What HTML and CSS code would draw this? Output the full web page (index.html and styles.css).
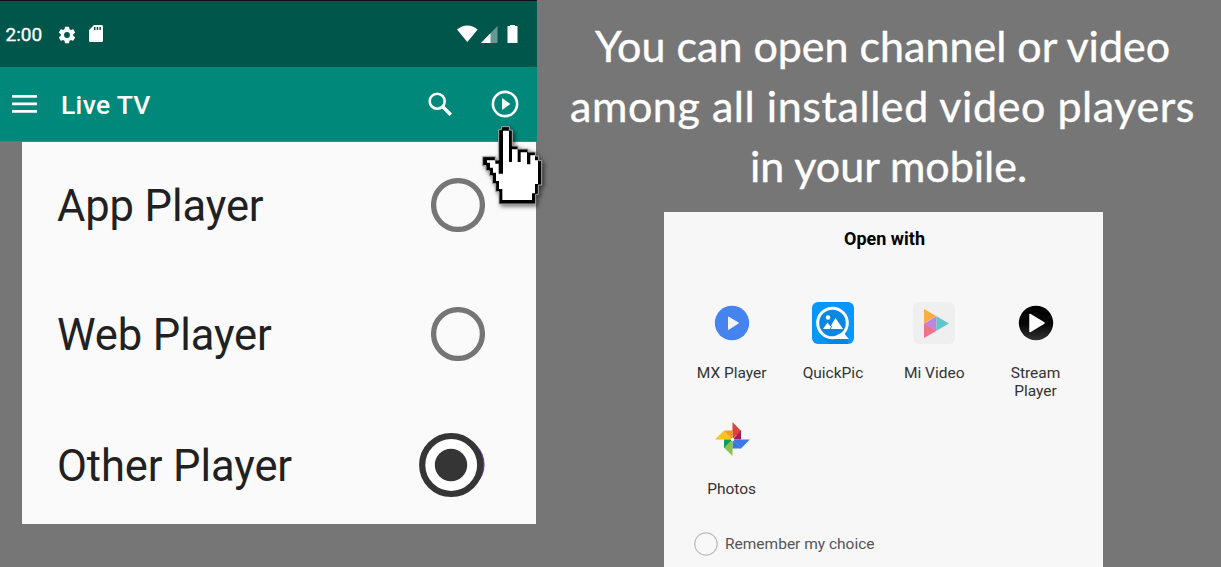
FILE: index.html
```html
<!DOCTYPE html>
<html lang="en">
<head>
<meta charset="utf-8">
<title>Live TV</title>
<link rel="stylesheet" href="styles.css">
</head>
<body>
<main class="stage">
  <section class="phone">
    <header class="status">
      <span class="clock">2:00</span>
      <svg class="gear" width="20" height="20" viewBox="0 0 24 24"><path fill="#fff" d="M19.43 12.98c.04-.32.07-.64.07-.98s-.03-.66-.07-.98l2.11-1.65c.19-.15.24-.42.12-.64l-2-3.46c-.12-.22-.39-.3-.61-.22l-2.49 1c-.52-.4-1.08-.73-1.69-.98l-.38-2.65C14.46 2.18 14.25 2 14 2h-4c-.25 0-.46.18-.49.42l-.38 2.65c-.61.25-1.17.59-1.69.98l-2.49-1c-.23-.09-.49 0-.61.22l-2 3.46c-.13.22-.07.49.12.64l2.11 1.65c-.04.32-.07.65-.07.98s.03.66.07.98l-2.11 1.65c-.19.15-.24.42-.12.64l2 3.46c.12.22.39.3.61.22l2.49-1c.52.4 1.08.73 1.69.98l.38 2.65c.03.24.24.42.49.42h4c.25 0 .46-.18.49-.42l.38-2.65c.61-.25 1.17-.59 1.69-.98l2.49 1c.23.09.49 0 .61-.22l2-3.46c.12-.22.07-.49-.12-.64zM12 15.5a3.5 3.5 0 1 1 0-7 3.500 3.500 0 0 1 0 7z"/></svg>
      <svg class="card" width="14" height="17" viewBox="0 0 14 17"><path fill="#fff" fill-rule="evenodd" d="M5 0h7.500Q14 0 14 1.500v14q0 1.500-1.500 1.500h-11Q0 17 0 15.500V5zM5 2v3h1.500V2zm2.700 0v3h1.500V2zm2.700 0v3h1.500V2z"/></svg>
      <svg class="signals" width="61" height="19" viewBox="0 0 61 19"><path fill="#fff" d="M0 4.500Q10.300-3.500 20.700 4.500L10.300 17z"/><path fill="#fff" opacity=".4" d="M40.500 1v17H24z"/><path fill="#fff" d="M33.500 8.200V18H24zM53 1V0h5v1h2.500v17h-10V1z"/></svg>
    </header>
    <div class="toolbar">
      <svg class="menu" width="26" height="18" viewBox="0 0 26 18"><path fill="#fff" d="M0 0h25v2.700H0zm0 7.500h25v2.700H0zM0 15h25v2.700H0z"/></svg>
      <h1 class="title">Live TV</h1>
      <svg class="search" width="25" height="25" viewBox="0 0 25 25" fill="none" stroke="#fff"><circle cx="9.200" cy="9.200" r="7.500" stroke-width="2.600"/><path d="m14.500 14.500 8.300 8.300" stroke-width="3.400"/></svg>
      <svg class="play" width="28" height="28" viewBox="0 0 28 28"><circle cx="14" cy="14" r="12.100" fill="none" stroke="#fff" stroke-width="2.600"/><path fill="#fff" d="M11 8l8.300 6-8.300 6z"/></svg>
    </div>
    <div class="options">
      <div class="option"><span class="label">App Player</span><svg width="54" height="54"><circle cx="27" cy="27" r="24.400" fill="none" stroke="#757575" stroke-width="5.300"/></svg></div>
      <div class="option"><span class="label">Web Player</span><svg width="54" height="54"><circle cx="27" cy="27" r="24.400" fill="none" stroke="#757575" stroke-width="5.300"/></svg></div>
      <div class="option"><span class="label">Other Player</span><svg width="66" height="66"><circle cx="38.600" cy="32.500" r="27" fill="#6c35c5"/><circle cx="32.200" cy="33" r="29" fill="#fff" stroke="#353535" stroke-width="6.200"/><circle cx="32" cy="33" r="16.200" fill="#353535"/></svg></div>
    </div>
    <svg class="cursor" width="72" height="92" viewBox="240 370 216 276">
      <path fill="#000" stroke="#aaa" stroke-width="3" d="M305 381h23v10h9v48h17v9h30v9h22v12h10v14h9v73h-10v28h-8v29H297v-37h-10v-24h-10v-24h-9v-15h-10v-15h-10v-27h38v10h10v-91h8z"/>
      <path fill="#fff" d="M309 393h18v94h9v-38h17v38h9v-29h19v36h10v-27h14v15h9v71h-9v28h-9v20h-89v-33h-10v-24h-9v-25h-9v-15h-9v-15h-9v-7h25v10h10v30h13z"/>
    </svg>
  </section>
  <section class="info">
    <h2 class="headline"><span class="line line-1">You can open channel or video</span><span class="line line-2">among all installed video players</span><span class="line line-3">in your mobile.</span></h2>
    <div class="sheet">
      <h3 class="sheet-title">Open with</h3>
      <div class="apps">
        <div class="app"><svg width="42" height="42"><circle cx="21" cy="21" r="17.200" fill="#4583ee"/><path fill="#f3f3f3" stroke="#f3f3f3" stroke-linejoin="round" d="M17.500 15v12.500L27.500 21z"/></svg><span>MX Player</span></div>
        <div class="app"><svg width="42" height="42"><rect width="42" height="42" rx="6" fill="#0796fa"/><path fill="#0785df" d="m32 34 4 3v5H17l-8-9z"/><circle cx="20.500" cy="21" r="14.800" fill="#0a87e3" stroke="#fff" stroke-width="3"/><path fill="#fff" d="M31 30q3 4 6 7H21v-2zM11 27l4.500-6.500 3 4L23.500 16l7.500 11z"/><path d="M18 27l2-3" stroke="#0a87e3"/><circle cx="16" cy="15.500" r="2.200" fill="#fff"/></svg><span>QuickPic</span></div>
        <div class="app"><svg width="42" height="42"><rect width="42" height="42" rx="6" fill="#efefef"/><path fill="#fbad42" d="M11 7v14l12.500-6.700z"/><path fill="#ef718a" d="M11 21v15l12.500-7.300z"/><path fill="#bd86dc" d="M23.500 14.300v14.400L11 21.500z"/><path fill="#61c6ca" d="M23.500 14.300v14.400l12.500-7.200z"/></svg><span>Mi Video</span></div>
        <div class="app"><svg width="42" height="42"><defs><linearGradient id="disc" x2="0" y2="1"><stop stop-color="#000"/><stop offset=".55" stop-color="#080808"/><stop offset="1" stop-color="#333"/></linearGradient></defs><circle cx="21" cy="21" r="17.200" fill="url(#disc)"/><path fill="#fff" stroke="#fff" stroke-width="1.500" stroke-linejoin="round" d="M15 12.500v17L29 21z"/></svg><span>Stream<br>Player</span></div>
        <div class="app"><svg width="42" height="42"><path fill="#dc4538" d="M21.500 4l8.500 9v8.500L21.500 13z"/><path fill="#dc4538" d="M21.500 12v9l8.500-9z"/><path fill="#aa1b57" d="M30 12.500v9h-8.500z"/><path fill="#fbc31c" d="M4 21.500l9-9 9 9z"/><path fill="#f79b1b" d="M13 12.500h8.500v9z"/><path fill="#3b78e7" d="M21.500 21.500h17.300l-8.800 9z"/><path fill="#3b78e7" d="M21.500 21.500v9H30.500z"/><path fill="#8bc34a" d="M21.500 21.500V38L13 29.500z"/><path fill="#109d58" d="M13 21.500h8.500L13 30z"/><circle cx="21.500" cy="21.500" r="1.700" fill="#fff"/></svg><span>Photos</span></div>
      </div>
      <label class="remember"><svg width="24" height="24"><circle cx="12" cy="12" r="11.200" fill="#f8f8f8" stroke="#bcbcbc" stroke-width="1.200"/></svg><span>Remember my choice</span></label>
    </div>
  </section>
</main>
</body>
</html>
```
FILE: styles.css
```css
* { box-sizing: border-box; }
body { margin: 0; background: #767676; font-family: Roboto, sans-serif; }
h1, h2, h3 { margin: 0; }
svg { display: block; flex: none; }
.stage { display: flex; width: 1221px; height: 567px; overflow: hidden; }
.phone { position: relative; width: 537px; flex: none; }
.status { display: flex; align-items: flex-start; height: 67px; padding: 24px 19px 0 5.500px; background: #00564b; border-top: 1px solid #0c1515; color: #fff; }
.clock { width: 51.500px; font-size: 19px; line-height: 20px; font-weight: 400; -webkit-text-stroke: .35px #fff; }
.card { margin: 0 0 0 12px; }
.signals { margin-left: auto; }
.toolbar { display: flex; align-items: center; height: 75px; padding: 0 18px 0 12px; background: #00897b; border-bottom: 1px solid #398a80; color: #fff; }
.title { margin-left: 23px; font-size: 26.5px; line-height: 32px; font-weight: 500; letter-spacing: .3px; padding-top: 2px; }
.search { margin-left: auto; margin-right: 38px; }
.options { width: 514px; height: 382px; margin-left: 22px; background: #fafafa; }
.option { display: flex; justify-content: space-between; align-items: center; height: 134px; padding: 0 51.500px 0 35px; }
.option:first-child { height: 125px; }
.option:last-child { height: 128px; padding-right: 51px; }
.label { padding-top: 4px; font-size: 43.500px; line-height: 52px; letter-spacing: -.1px; color: #212121; white-space: nowrap; }
.cursor { position: absolute; left: 480px; top: 123px; overflow: visible; filter: drop-shadow(2px 2px 2px rgba(0, 0, 0, .55)); }
.info { flex: 1; }
.headline { height: 212px; padding-top: 16px; color: #fff; font: 400 43px/60px Lato, sans-serif; -webkit-text-stroke: .4px #fff; }
.line { display: block; width: max-content; white-space: nowrap; }
.line-1 { margin-left: 58px; }
.line-2 { margin-left: 33px; letter-spacing: .57px; }
.line-3 { margin-left: 213px; }
.sheet { width: 439px; height: 355px; margin-left: 127px; padding: 15px 17px 0 17px; background: #f7f7f7; }
.sheet-title { font-size: 18px; line-height: 24px; text-align: center; font-weight: 700; color: #000; padding-left: 2px; }
.apps { display: grid; grid-template-columns: repeat(4, 101.300px); grid-template-rows: 116px 116px; padding-top: 51px; }
.app { display: flex; flex-direction: column; align-items: center; gap: 20px; font-size: 15.500px; line-height: 18px; text-align: center; color: #333; }
.remember { display: flex; align-items: center; gap: 7px; margin: -2px 0 0 13px; height: 24px; font-size: 15.500px; color: #555; }
```
